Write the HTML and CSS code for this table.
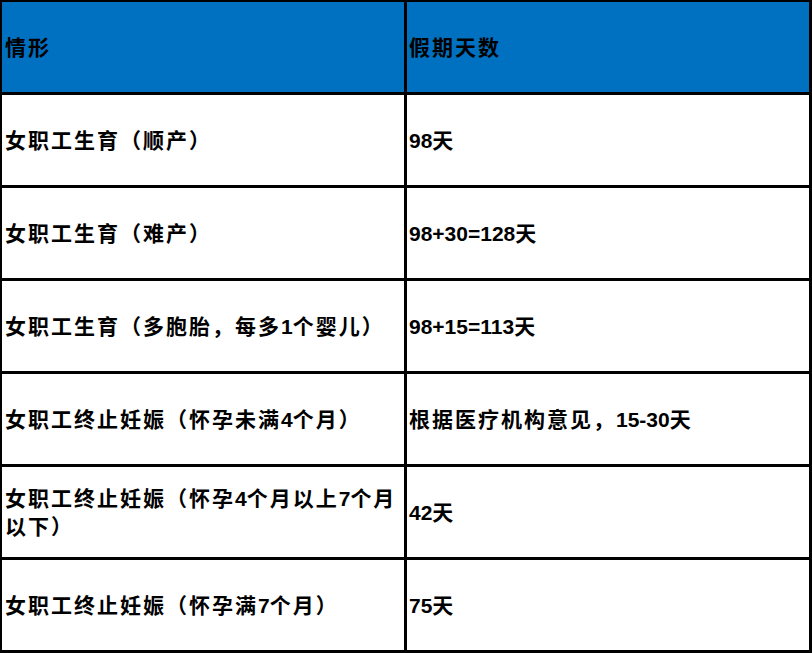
FILE: index.html
```html
<!DOCTYPE html>
<html lang="zh-CN">
<head>
<meta charset="utf-8">
<title>假期天数</title>
<link rel="stylesheet" href="styles.css">
</head>
<body>
<div class="table">
  <div class="cell head"><p class="txt">情形</p></div>
  <div class="cell head"><p class="txt">假期天数</p></div>

  <div class="cell"><p class="txt">女职工生育（顺产）</p></div>
  <div class="cell"><p class="txt"><span class="num">98</span>天</p></div>

  <div class="cell"><p class="txt">女职工生育（难产）</p></div>
  <div class="cell"><p class="txt"><span class="num">98+30=128</span>天</p></div>

  <div class="cell"><p class="txt">女职工生育（多胞胎，每多<span class="num">1</span>个婴儿）</p></div>
  <div class="cell"><p class="txt"><span class="num">98+15=113</span>天</p></div>

  <div class="cell"><p class="txt">女职工终止妊娠（怀孕未满<span class="num">4</span>个月）</p></div>
  <div class="cell"><p class="txt">根据医疗机构意见，<span class="num">15-30</span>天</p></div>

  <div class="cell"><p class="txt">女职工终止妊娠（怀孕<span class="num">4</span>个月以上<span class="num">7</span>个月以下）</p></div>
  <div class="cell"><p class="txt"><span class="num">42</span>天</p></div>

  <div class="cell"><p class="txt">女职工终止妊娠（怀孕满<span class="num">7</span>个月）</p></div>
  <div class="cell"><p class="txt"><span class="num">75</span>天</p></div>
</div>
</body>
</html>
```

FILE: styles.css
```css
html, body {
  margin: 0;
  padding: 0;
  background: #ffffff;
}

.table {
  width: 812px;
  height: 653px;
  box-sizing: border-box;
  display: grid;
  grid-template-columns: 402px 402px;
  grid-auto-rows: 90px;
  gap: 3px;
  padding: 2px 3px 3px 2px;
  background: #000000;
}

.cell {
  background: #ffffff;
  display: flex;
  align-items: center;
  padding: 1px 2px 0 3px;
  font-family: "Liberation Sans", "Noto Sans CJK SC", sans-serif;
  font-weight: 700;
  font-size: 21px;
  line-height: 28px;
  letter-spacing: 2px;
  color: #000000;
}

.cell:nth-child(even) {
  padding-left: 2px;
}

.cell.head {
  background: #0070c0;
}

.txt {
  margin: 0;
}

.num {
  letter-spacing: 0;
}
```
